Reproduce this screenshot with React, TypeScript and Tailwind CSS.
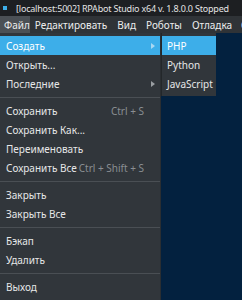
import React from "react";

type Item = { label: string; shortcut?: string; sub?: boolean; active?: boolean } | "sep";

const items: Item[] = [
  { label: "Создать", sub: true, active: true },
  { label: "Открыть..." },
  { label: "Последние", sub: true },
  "sep",
  { label: "Сохранить", shortcut: "Ctrl + S" },
  { label: "Сохранить Как..." },
  { label: "Переименовать" },
  { label: "Сохранить Все", shortcut: "Ctrl + Shift + S" },
  "sep",
  { label: "Закрыть" },
  { label: "Закрыть Все" },
  "sep",
  { label: "Бэкап" },
  { label: "Удалить" },
  "sep",
  { label: "Выход" },
];

function Arrow({ light }: { light?: boolean }) {
  return (
    <svg width="4" height="6" viewBox="0 0 4 6" className="shrink-0">
      <path d="M0 0 L4 3 L0 6 Z" fill={light ? "#a9d8f2" : "#9a9ea2"} />
    </svg>
  );
}

export default function App() {
  return (
    <div
      className="w-[242px] h-[300px] overflow-hidden bg-[#03213f] flex flex-col text-[10px] leading-none"
      style={{ fontFamily: '"Noto Sans", "Open Sans", sans-serif' }}
    >
      <div className="h-[16px] shrink-0 bg-[#1d1f22] flex items-center text-[#e4e4e4] text-[9px] whitespace-nowrap">
        <div className="w-[4px] h-[4px] bg-[#3daee9] ml-[3px] mr-[9px]" />
        <span className="tracking-[-0.2px]">[localhost:5002] RPAbot Studio x64 v. 1.8.0.0 Stopped</span>
      </div>
      <div className="h-[17px] shrink-0 bg-[#2f3337] flex items-stretch text-[#eceded] whitespace-nowrap">
        <div className="bg-[#4b5055] pl-[4px] flex items-center w-[32px]">Файл</div>
        <div className="pl-[5px] pr-[10px] flex items-center">Редактировать</div>
        <div className="pr-[10px] flex items-center">Вид</div>
        <div className="pr-[10px] flex items-center">Роботы</div>
        <div className="pr-[9px] flex items-center">Отладка</div>
        <div className="flex items-center">Сервис</div>
      </div>
      <div className="flex flex-1 items-start">
        <div className="w-[161px] h-full bg-[#31363b] pt-[3px] border-r border-[#2a2e32]">
          {items.map((it, i) =>
            it === "sep" ? (
              <div key={i} className="h-[8px] flex items-center">
                <div className="h-[1px] w-full bg-[#4a4f54]" />
              </div>
            ) : (
              <div
                key={i}
                className={`h-[19px] flex items-center pl-[6px] pr-[5px] whitespace-nowrap ${
                  it.active ? "bg-[#3daee9] text-white" : "text-[#e6e7e8]"
                }`}
              >
                <span className="flex-1">{it.label}</span>
                {it.shortcut && <span className="text-[#8a8e92] mr-[11px]">{it.shortcut}</span>}
                {it.sub && <Arrow light={it.active} />}
              </div>
            )
          )}
        </div>
        <div className="w-[55px] bg-[#31363b] pt-[3px] pb-[3px] border-l border-[#23272a]">
          <div className="h-[19px] flex items-center pl-[5px] bg-[#3daee9] text-white">PHP</div>
          <div className="h-[19px] flex items-center pl-[5px] text-[#e6e7e8]">Python</div>
          <div className="h-[19px] flex items-center pl-[5px] text-[#e6e7e8]">JavaScript</div>
        </div>
      </div>
    </div>
  );
}
